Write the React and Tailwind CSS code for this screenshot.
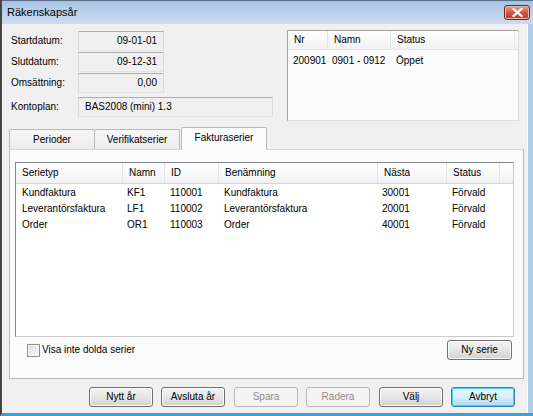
import React from "react";

const btnBase =
  "h-[20px] rounded-[3px] border text-[10px] flex items-center justify-center";
const btnNormal =
  btnBase +
  " border-[#707070] bg-gradient-to-b from-[#f3f3f3] via-[#e6e6e6] to-[#d2d2d2] text-black shadow-[inset_0_0_0_1px_#fcfcfc]";
const btnDisabled =
  btnBase + " border-[#b5b9bc] bg-[#f4f4f4] text-[#8d8d8d]";
const btnDefault =
  btnBase +
  " border-[#3c7fb1] bg-gradient-to-b from-[#eaf6fd] via-[#d9f0fc] to-[#a7d9f5] text-black shadow-[inset_0_0_0_1px_#48d0fa]";

function Field({ label, value, width, right }) {
  return (
    <div className="flex items-center h-[21px]">
      <div className="w-[67px]">{label}</div>
      <div
        className={
          "h-[20px] border border-t-[#abadb3] border-l-[#dadada] border-r-[#dadada] border-b-[#e3e3e3] bg-[#f0f0f0] flex items-center px-[6px] " +
          (right ? "justify-end " : "") +
          width
        }
      >
        {value}
      </div>
    </div>
  );
}

function HeaderCell({ children, className }) {
  return (
    <div
      className={
        "h-full flex items-center pl-[6px] border-r border-[#e3e4e6] whitespace-nowrap " +
        (className || "")
      }
    >
      {children}
    </div>
  );
}

export default function App() {
  const rows = [
    ["Kundfaktura", "KF1", "110001", "Kundfaktura", "30001", "Förvald"],
    ["Leverantörsfaktura", "LF1", "110002", "Leverantörsfaktura", "20001", "Förvald"],
    ["Order", "OR1", "110003", "Order", "40001", "Förvald"],
  ];
  return (
    <div className="w-[533px] h-[416px] flex flex-col bg-[#b3cce8] border-l-2 border-[#454545] border-b-[3px] border-b-[#3aa0dc] font-['Tahoma','Liberation_Sans',sans-serif] text-[10px] leading-none text-black overflow-hidden">
      {/* Title bar */}
      <div className="h-[24px] shrink-0 flex items-center bg-gradient-to-b from-[#a5c1e2] via-[#bcd2ec] to-[#cadcf0] border-t border-[#5a6f86] pl-[5px]">
        <span className="text-[11px] font-['Liberation_Sans',sans-serif] text-black">
          Räkenskapsår
        </span>
        <div className="ml-auto mr-[3px] w-[26px] h-[15px] rounded-[3px] border border-[#6b2a1f] bg-gradient-to-b from-[#e8a493] via-[#d0563c] to-[#c23a22] flex items-center justify-center shadow-[inset_0_0_0_1px_#f0b6a6]">
          <svg width="11" height="9" viewBox="0 0 11 9">
            <path
              d="M1.5 1 L9.5 8 M9.5 1 L1.5 8"
              stroke="#ffffff"
              strokeWidth="2.2"
              strokeLinecap="square"
            />
          </svg>
        </div>
      </div>

      {/* Client area */}
      <div className="flex-1 flex flex-col bg-[#f0f0f0] border-l border-[#fafafa] border-r border-r-[#fafafa] mr-[5px] pl-[8px] pr-[8px]">
        {/* Top section */}
        <div className="flex mt-[6px] h-[91px]">
          <div className="flex flex-col">
            <Field label="Startdatum:" value="09-01-01" width="w-[86px]" right />
            <Field label="Slutdatum:" value="09-12-31" width="w-[86px]" right />
            <Field label="Omsättning:" value="0,00" width="w-[86px]" right />
            <div className="h-[3px]" />
            <Field label="Kontoplan:" value="BAS2008 (mini) 1.3" width="w-[195px]" />
          </div>
          <div className="ml-[14px] w-[232px] h-[91px] border border-[#a0a0a0] border-b-[#dcdcdc] border-r-[#dcdcdc] bg-[#fbfbfb] flex flex-col">
            <div className="h-[19px] flex bg-gradient-to-b from-[#ffffff] to-[#f1f2f3] border-b border-[#e5e5e5]">
              <HeaderCell className="w-[40px]">Nr</HeaderCell>
              <HeaderCell className="w-[63px]">Namn</HeaderCell>
              <HeaderCell className="w-[124px]">Status</HeaderCell>
            </div>
            <div className="h-[21px] flex items-center whitespace-nowrap">
              <div className="w-[40px] pl-[5px]">200901</div>
              <div className="w-[63px] pl-[4px]">0901 - 0912</div>
              <div className="pl-[5px]">Öppet</div>
            </div>
          </div>
        </div>

        {/* Tabs */}
        <div className="mt-[5px] ml-[-2px] flex items-end h-[23px] relative z-10">
          <div className="w-[86px] h-[20px] border border-[#b9b9b9] border-b-0 rounded-t-[2px] bg-gradient-to-b from-[#f7f7f7] to-[#ececec] flex items-center justify-center">
            Perioder
          </div>
          <div className="w-[85px] h-[20px] border border-[#b9b9b9] border-l-0 border-b-0 rounded-t-[2px] bg-gradient-to-b from-[#f7f7f7] to-[#ececec] flex items-center justify-center">
            Verifikatserier
          </div>
          <div className="w-[86px] h-[23px] ml-[1px] border border-[#b9b9b9] border-b-0 rounded-t-[2px] bg-[#fbfbfb] flex items-center justify-center pb-[2px] mb-[-1px]">
            Fakturaserier
          </div>
        </div>

        {/* Tab panel */}
        <div className="ml-[-2px] w-[515px] h-[230px] border border-[#b9b9b9] border-t-[#d9d9d9] bg-[#fbfbfb] flex flex-col px-[5px]">
          <div className="mt-[12px] w-[499px] h-[175px] border border-[#828790] border-b-[#c9c9c9] border-r-[#c9c9c9] bg-white flex flex-col">
            <div className="h-[21px] flex bg-gradient-to-b from-[#ffffff] to-[#f1f2f4] border-b border-[#d5d5d5]">
              <HeaderCell className="w-[107px]">Serietyp</HeaderCell>
              <HeaderCell className="w-[42px]">Namn</HeaderCell>
              <HeaderCell className="w-[54px]">ID</HeaderCell>
              <HeaderCell className="w-[159px]">Benämning</HeaderCell>
              <HeaderCell className="w-[69px]">Nästa</HeaderCell>
              <HeaderCell className="w-[53px]">Status</HeaderCell>
              <div className="flex-1" />
            </div>
            <div className="pt-[1px]">
              {rows.map((r) => (
                <div key={r[0]} className="h-[16px] flex items-center whitespace-nowrap">
                  <div className="w-[107px] pl-[6px]">{r[0]}</div>
                  <div className="w-[42px] pl-[4px]">{r[1]}</div>
                  <div className="w-[54px] pl-[5px]">{r[2]}</div>
                  <div className="w-[159px] pl-[5px]">{r[3]}</div>
                  <div className="w-[69px] pl-[4px]">{r[4]}</div>
                  <div className="w-[53px] pl-[5px]">{r[5]}</div>
                </div>
              ))}
            </div>
          </div>
          <div className="flex items-center mt-[4px] h-[18px]">
            <div className="ml-[12px] w-[13px] h-[13px] border border-[#8f8f8f] bg-gradient-to-br from-[#dcdcdc] to-[#fafafa] shadow-[inset_0_0_0_1px_#f4f4f4]" />
            <span className="ml-[2px]">Visa inte dolda serier</span>
            <div className={btnNormal + " ml-auto mr-[6px] w-[65px]"}>Ny serie</div>
          </div>
        </div>

        {/* Bottom buttons */}
        <div className="flex mt-[8px] pl-[78px]">
          <div className={btnNormal + " w-[64px]"}>Nytt år</div>
          <div className={btnNormal + " w-[64px] ml-[8px]"}>Avsluta år</div>
          <div className={btnDisabled + " w-[64px] ml-[9px]"}>Spara</div>
          <div className={btnDisabled + " w-[64px] ml-[8px]"}>Radera</div>
          <div className={btnNormal + " w-[64px] ml-[9px]"}>Välj</div>
          <div className={btnDefault + " w-[64px] ml-[8px]"}>Avbryt</div>
        </div>
      </div>
    </div>
  );
}
